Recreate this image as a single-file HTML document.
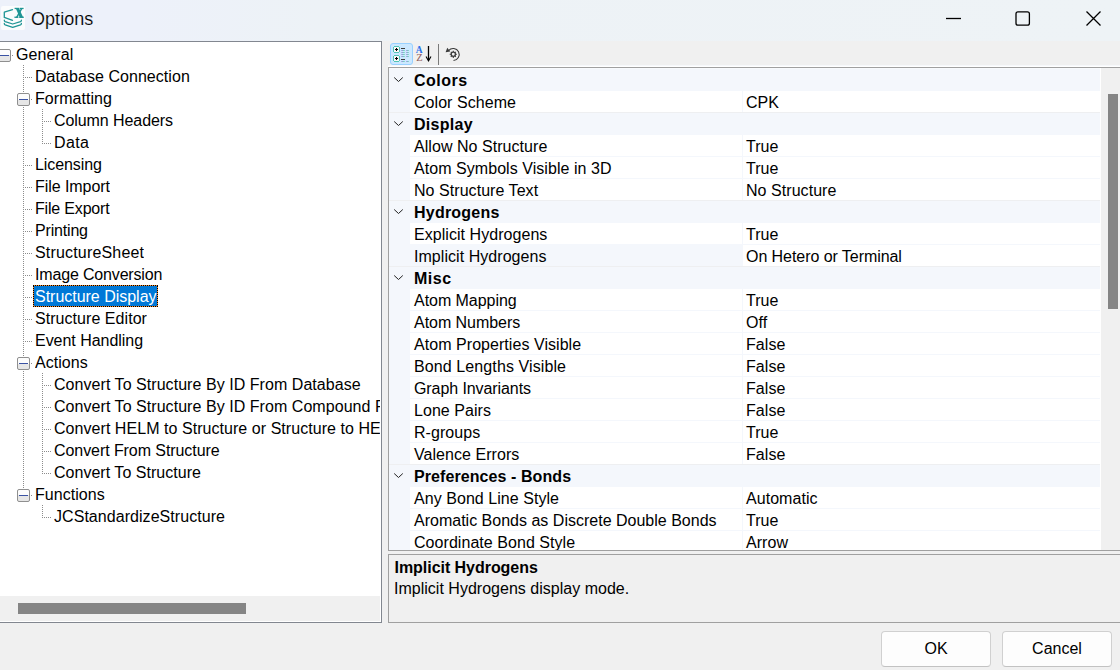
<!DOCTYPE html>
<html><head><meta charset="utf-8"><title>Options</title>
<style>
*{margin:0;padding:0;box-sizing:border-box}
html,body{width:1120px;height:670px;overflow:hidden;background:#f0f0f0}
body{position:relative;font-family:"Liberation Sans",sans-serif;font-size:16px;color:#000}
.a{position:absolute}
.t{position:absolute;white-space:nowrap;line-height:22px;height:22px;margin-top:1px;letter-spacing:0.05px}
.b{font-weight:bold}
.dv{position:absolute;width:1px;background-image:linear-gradient(#8c8c8c 50%,transparent 50%);background-size:1px 2px}
.dh{position:absolute;height:1px;background-image:linear-gradient(90deg,#8c8c8c 50%,transparent 50%);background-size:2px 1px}
.bx{position:absolute;width:13px;height:13px;border:1px solid #8f8f8f;border-radius:2px;background:linear-gradient(#fcfcfc 0,#fcfcfc 50%,#e6e6e6 50%,#e6e6e6 100%)}
.bx i{position:absolute;left:1px;top:5px;width:9px;height:1px;background:#3a52a3}
.gr{position:absolute;height:21px;background:#fff}
</style></head><body>

<div class="a" style="left:0;top:0;width:1120px;height:41px;background:linear-gradient(90deg,#edf1fa 0,#edf1fa 140px,#edf2f6 320px,#eef3f6 1120px)"></div>
<div class="a" style="left:1px;top:6px;width:24px;height:24px;background:#fbfcfd;border-radius:2px"></div>
<svg class="a" style="left:0;top:0" width="30" height="32" viewBox="0 0 30 32">
<g fill="none" stroke="#1f9595" stroke-width="1.3" stroke-linecap="round" stroke-linejoin="round">
<path d="M12.5 9.6 L4.3 12.2 L4.3 17.4 L12.5 20.4"/>
<path d="M4.3 20.2 Q4.3 21.3 5.2 21.7 L12.7 24 L20.5 21.7 Q21.4 21.3 21.4 20.2"/>
<path d="M4.3 23.4 Q4.3 24.5 5.2 24.9 L12.7 27.3 L20.5 24.9 Q21.4 24.5 21.4 23.4"/>
</g>
<g fill="#1f9595"><path d="M15.6 8 L18.9 8 L23.3 17.8 L19.9 17.8 z"/><path d="M21.2 8 L22.9 8 L17.4 17.8 L15.6 17.8 z"/>
<rect x="14.6" y="7.8" width="4.6" height="1.3"/><rect x="19.8" y="7.8" width="3.8" height="1.3"/><rect x="14.4" y="16.6" width="4" height="1.3"/><rect x="19.2" y="16.6" width="4.6" height="1.3"/></g>
</svg>
<div class="t" style="left:31px;top:7px;font-size:18px;line-height:22px;color:#000;-webkit-text-stroke:0.15px #edf1fa">Options</div>
<svg class="a" style="left:930px;top:0" width="190" height="40" viewBox="930 0 190 40">
<path d="M946 18.5 H961" stroke="#000" stroke-width="1.3"/>
<rect x="1016" y="11.8" width="13.4" height="13.4" rx="2" fill="none" stroke="#000" stroke-width="1.3"/>
<path d="M1086.5 11.5 L1100.5 25.5 M1100.5 11.5 L1086.5 25.5" stroke="#000" stroke-width="1.3"/>
</svg>
<div class="a" style="left:-1px;top:41px;width:383px;height:582px;border:1px solid #828790;background:#fff"></div>
<div class="a" style="left:0;top:596px;width:380px;height:25px;background:#f0f0f0"></div>
<div class="a" style="left:18px;top:603px;width:228px;height:11px;background:#858585"></div>
<div class="dv" style="left:23px;top:65px;height:424px"></div>
<div class="dv" style="left:42px;top:109px;height:35px"></div>
<div class="dv" style="left:42px;top:373px;height:101px"></div>
<div class="dv" style="left:42px;top:505px;height:13px"></div>
<div class="bx" style="left:-2px;top:49px"><i></i></div>
<div class="dh" style="left:12px;top:55px;width:1px"></div>
<div class="t" style="left:16px;top:43px;max-width:364px;overflow:hidden;letter-spacing:0.050px">General</div>
<div class="dh" style="left:23px;top:77px;width:9px"></div>
<div class="t" style="left:35px;top:65px;max-width:345px;overflow:hidden;letter-spacing:0.050px">Database Connection</div>
<div class="bx" style="left:17px;top:93px"><i></i></div>
<div class="dh" style="left:31px;top:99px;width:1px"></div>
<div class="t" style="left:35px;top:87px;max-width:345px;overflow:hidden;letter-spacing:0.050px">Formatting</div>
<div class="dh" style="left:42px;top:121px;width:9px"></div>
<div class="t" style="left:54px;top:109px;max-width:326px;overflow:hidden;letter-spacing:-0.073px">Column Headers</div>
<div class="dh" style="left:42px;top:143px;width:9px"></div>
<div class="t" style="left:54px;top:131px;max-width:326px;overflow:hidden;letter-spacing:0.383px">Data</div>
<div class="dh" style="left:23px;top:165px;width:9px"></div>
<div class="t" style="left:35px;top:153px;max-width:345px;overflow:hidden;letter-spacing:-0.088px">Licensing</div>
<div class="dh" style="left:23px;top:187px;width:9px"></div>
<div class="t" style="left:35px;top:175px;max-width:345px;overflow:hidden;letter-spacing:-0.060px">File Import</div>
<div class="dh" style="left:23px;top:209px;width:9px"></div>
<div class="t" style="left:35px;top:197px;max-width:345px;overflow:hidden;letter-spacing:-0.180px">File Export</div>
<div class="dh" style="left:23px;top:231px;width:9px"></div>
<div class="t" style="left:35px;top:219px;max-width:345px;overflow:hidden;letter-spacing:-0.179px">Printing</div>
<div class="dh" style="left:23px;top:253px;width:9px"></div>
<div class="t" style="left:35px;top:241px;max-width:345px;overflow:hidden;letter-spacing:0.173px">StructureSheet</div>
<div class="dh" style="left:23px;top:275px;width:9px"></div>
<div class="t" style="left:35px;top:263px;max-width:345px;overflow:hidden;letter-spacing:-0.163px">Image Conversion</div>
<div class="dh" style="left:23px;top:297px;width:9px"></div>
<div class="a" style="left:33px;top:285px;width:125px;height:22px;background:#0078d7;border:1px solid #ff8c2a;outline:1px dotted #000;outline-offset:-1px"></div>
<div class="t" style="left:35px;top:285px;color:#fff;letter-spacing:-0.019px">Structure Display</div>
<div class="dh" style="left:23px;top:319px;width:9px"></div>
<div class="t" style="left:35px;top:307px;max-width:345px;overflow:hidden;letter-spacing:0.050px">Structure Editor</div>
<div class="dh" style="left:23px;top:341px;width:9px"></div>
<div class="t" style="left:35px;top:329px;max-width:345px;overflow:hidden;letter-spacing:-0.035px">Event Handling</div>
<div class="bx" style="left:17px;top:357px"><i></i></div>
<div class="dh" style="left:31px;top:363px;width:1px"></div>
<div class="t" style="left:35px;top:351px;max-width:345px;overflow:hidden;letter-spacing:0.050px">Actions</div>
<div class="dh" style="left:42px;top:385px;width:9px"></div>
<div class="t" style="left:54px;top:373px;max-width:326px;overflow:hidden;letter-spacing:0.050px">Convert To Structure By ID From Database</div>
<div class="dh" style="left:42px;top:407px;width:9px"></div>
<div class="t" style="left:54px;top:395px;max-width:326px;overflow:hidden;letter-spacing:0.050px">Convert To Structure By ID From Compound Registration</div>
<div class="dh" style="left:42px;top:429px;width:9px"></div>
<div class="t" style="left:54px;top:417px;max-width:326px;overflow:hidden;letter-spacing:0.050px">Convert HELM to Structure or Structure to HELM</div>
<div class="dh" style="left:42px;top:451px;width:9px"></div>
<div class="t" style="left:54px;top:439px;max-width:326px;overflow:hidden;letter-spacing:-0.074px">Convert From Structure</div>
<div class="dh" style="left:42px;top:473px;width:9px"></div>
<div class="t" style="left:54px;top:461px;max-width:326px;overflow:hidden;letter-spacing:0.024px">Convert To Structure</div>
<div class="bx" style="left:17px;top:489px"><i></i></div>
<div class="dh" style="left:31px;top:495px;width:1px"></div>
<div class="t" style="left:35px;top:483px;max-width:345px;overflow:hidden;letter-spacing:0.050px">Functions</div>
<div class="dh" style="left:42px;top:517px;width:9px"></div>
<div class="t" style="left:54px;top:505px;max-width:326px;overflow:hidden;letter-spacing:0.050px">JCStandardizeStructure</div>
<div class="a" style="left:390px;top:43px;width:23px;height:22px;background:#cce8ff;border:1px solid #99d1ff;border-radius:3px"></div>
<svg class="a" style="left:388px;top:41px" width="80" height="26" viewBox="388 41 80 26">
<defs><linearGradient id="dg" x1="0" x2="1"><stop offset="0" stop-color="#a8c8f0"/><stop offset="0.3" stop-color="#a88ad8"/><stop offset="0.6" stop-color="#70cfc0"/><stop offset="1" stop-color="#9adcd0"/></linearGradient></defs>
<g shape-rendering="crispEdges">
<path d="M394 46h5v1h1v5h-1v1h-5v-1h-1v-5h1z" fill="#52c6b6"/>
<rect x="394" y="47" width="5" height="5" fill="#fbf7f7"/>
<path d="M394 55h5v1h1v5h-1v1h-5v-1h-1v-5h1z" fill="#52c6b6"/>
<rect x="394" y="56" width="5" height="5" fill="#fbf7f7"/>
<path d="M396 48h1v1h1v1h-1v1h-1v-1h-1v-1h1z" fill="#000"/>
<path d="M396 57h1v1h1v1h-1v1h-1v-1h-1v-1h1z" fill="#000"/>
<rect x="401" y="48" width="4" height="1" fill="#3a3a3a"/>
<rect x="401" y="59" width="4" height="1" fill="#3a3a3a"/>
<rect x="401" y="50" width="4" height="1" fill="url(#dg)"/><rect x="406" y="50" width="3" height="1" fill="url(#dg)"/>
<rect x="401" y="52" width="4" height="1" fill="url(#dg)"/><rect x="406" y="52" width="3" height="1" fill="url(#dg)"/>
<rect x="401" y="54" width="4" height="1" fill="url(#dg)"/><rect x="406" y="54" width="3" height="1" fill="url(#dg)"/>
<rect x="401" y="56" width="4" height="1" fill="url(#dg)"/><rect x="406" y="56" width="3" height="1" fill="url(#dg)"/>
<rect x="401" y="61" width="4" height="1" fill="url(#dg)"/><rect x="406" y="61" width="3" height="1" fill="url(#dg)"/>
</g>
<text x="415.8" y="53.3" font-family="Liberation Serif" font-weight="bold" font-size="9.5" fill="#2a6ee8">A</text>
<text x="416.3" y="61.3" font-family="Liberation Serif" font-size="10.5" fill="#8f5a5a">Z</text>
<path d="M428.5 46 V60" fill="none" stroke="#000" stroke-width="1.3"/>
<path d="M426 56.5 L428.5 60.8 L431 56.5" fill="none" stroke="#000" stroke-width="1.1"/>
<path d="M438.5 44 V65" stroke="#7a7a7a" stroke-width="1"/>
<path d="M448.6 50.6 A6 6 0 1 1 453.5 60.5" fill="none" stroke="#3a3a3a" stroke-width="1.1"/>
<path d="M447.3 47.8 L445.6 52.2 L450.2 51.6 z" fill="#3a3a3a"/>
<circle cx="453.3" cy="54.3" r="2.1" fill="none" stroke="#3a3a3a" stroke-width="1.3"/>
<g stroke="#3a3a3a" stroke-width="1.1">
<path d="M453.3 50.7 V52 M453.3 56.6 V57.9 M449.7 54.3 H451 M455.6 54.3 H456.9 M450.8 51.8 L451.7 52.7 M454.9 55.9 L455.8 56.8 M455.8 51.8 L454.9 52.7 M451.7 55.9 L450.8 56.8"/>
</g>
</svg>
<div class="a" style="left:388px;top:65px;width:732px;height:1px;background:#f6f8fb"></div>
<div class="a" style="left:388px;top:66px;width:732px;height:1px;background:#fff"></div>
<div class="a" style="left:388px;top:67px;width:740px;height:484px;border:1px solid #a0a0a0;background:#f4f7fc"></div>
<div class="a" style="left:389px;top:68px;width:712px;height:1px;background:#f8fafd"></div>
<div class="a" style="left:1100px;top:68px;width:1px;height:482px;background:#fff"></div>
<div class="a" style="left:1101px;top:68px;width:19px;height:482px;background:#f0f0f0"></div>
<div class="a" style="left:1108px;top:94px;width:10px;height:215px;background:#858585"></div>
<div class="a" style="left:389px;top:68px;width:711px;height:482px;overflow:hidden">
<svg class="a" style="left:4px;top:8px" width="12" height="8" viewBox="0 0 12 8"><path d="M1.2 1.5 L5.5 5.5 L9.8 1.5" fill="none" stroke="#222" stroke-width="1"/></svg>
<div class="t b" style="left:25px;top:1px;letter-spacing:0.5px">Colors</div>
<div class="gr" style="left:21px;top:23px;width:332px"></div>
<div class="gr" style="left:354px;top:23px;width:357px"></div>
<div class="t" style="left:25px;top:23px;letter-spacing:0.050px">Color Scheme</div>
<div class="t" style="left:357px;top:23px;letter-spacing:0.050px">CPK</div>
<svg class="a" style="left:4px;top:52px" width="12" height="8" viewBox="0 0 12 8"><path d="M1.2 1.5 L5.5 5.5 L9.8 1.5" fill="none" stroke="#222" stroke-width="1"/></svg>
<div class="t b" style="left:25px;top:45px;letter-spacing:0.3px">Display</div>
<div class="a" style="left:0;top:44px;width:711px;height:1px;background:#eeeff1"></div>
<div class="gr" style="left:21px;top:67px;width:332px"></div>
<div class="gr" style="left:354px;top:67px;width:357px"></div>
<div class="t" style="left:25px;top:67px;letter-spacing:0.050px">Allow No Structure</div>
<div class="t" style="left:357px;top:67px;letter-spacing:0.050px">True</div>
<div class="gr" style="left:21px;top:89px;width:332px"></div>
<div class="gr" style="left:354px;top:89px;width:357px"></div>
<div class="t" style="left:25px;top:89px;letter-spacing:0.050px">Atom Symbols Visible in 3D</div>
<div class="t" style="left:357px;top:89px;letter-spacing:0.050px">True</div>
<div class="gr" style="left:21px;top:111px;width:332px"></div>
<div class="gr" style="left:354px;top:111px;width:357px"></div>
<div class="t" style="left:25px;top:111px;letter-spacing:0.050px">No Structure Text</div>
<div class="t" style="left:357px;top:111px;letter-spacing:0.050px">No Structure</div>
<svg class="a" style="left:4px;top:140px" width="12" height="8" viewBox="0 0 12 8"><path d="M1.2 1.5 L5.5 5.5 L9.8 1.5" fill="none" stroke="#222" stroke-width="1"/></svg>
<div class="t b" style="left:25px;top:133px;letter-spacing:0.22px">Hydrogens</div>
<div class="a" style="left:0;top:132px;width:711px;height:1px;background:#eeeff1"></div>
<div class="gr" style="left:21px;top:155px;width:332px"></div>
<div class="gr" style="left:354px;top:155px;width:357px"></div>
<div class="t" style="left:25px;top:155px;letter-spacing:0.050px">Explicit Hydrogens</div>
<div class="t" style="left:357px;top:155px;letter-spacing:0.050px">True</div>
<div class="gr" style="left:354px;top:177px;width:357px"></div>
<div class="t" style="left:25px;top:177px;letter-spacing:0.050px">Implicit Hydrogens</div>
<div class="t" style="left:357px;top:177px;letter-spacing:-0.060px">On Hetero or Terminal</div>
<svg class="a" style="left:4px;top:206px" width="12" height="8" viewBox="0 0 12 8"><path d="M1.2 1.5 L5.5 5.5 L9.8 1.5" fill="none" stroke="#222" stroke-width="1"/></svg>
<div class="t b" style="left:25px;top:199px;letter-spacing:0.5px">Misc</div>
<div class="a" style="left:0;top:198px;width:711px;height:1px;background:#eeeff1"></div>
<div class="gr" style="left:21px;top:221px;width:332px"></div>
<div class="gr" style="left:354px;top:221px;width:357px"></div>
<div class="t" style="left:25px;top:221px;letter-spacing:-0.041px">Atom Mapping</div>
<div class="t" style="left:357px;top:221px;letter-spacing:0.050px">True</div>
<div class="gr" style="left:21px;top:243px;width:332px"></div>
<div class="gr" style="left:354px;top:243px;width:357px"></div>
<div class="t" style="left:25px;top:243px;letter-spacing:-0.041px">Atom Numbers</div>
<div class="t" style="left:357px;top:243px;letter-spacing:0.050px">Off</div>
<div class="gr" style="left:21px;top:265px;width:332px"></div>
<div class="gr" style="left:354px;top:265px;width:357px"></div>
<div class="t" style="left:25px;top:265px;letter-spacing:0.050px">Atom Properties Visible</div>
<div class="t" style="left:357px;top:265px;letter-spacing:0.050px">False</div>
<div class="gr" style="left:21px;top:287px;width:332px"></div>
<div class="gr" style="left:354px;top:287px;width:357px"></div>
<div class="t" style="left:25px;top:287px;letter-spacing:0.103px">Bond Lengths Visible</div>
<div class="t" style="left:357px;top:287px;letter-spacing:0.050px">False</div>
<div class="gr" style="left:21px;top:309px;width:332px"></div>
<div class="gr" style="left:354px;top:309px;width:357px"></div>
<div class="t" style="left:25px;top:309px;letter-spacing:-0.083px">Graph Invariants</div>
<div class="t" style="left:357px;top:309px;letter-spacing:0.050px">False</div>
<div class="gr" style="left:21px;top:331px;width:332px"></div>
<div class="gr" style="left:354px;top:331px;width:357px"></div>
<div class="t" style="left:25px;top:331px;letter-spacing:0.050px">Lone Pairs</div>
<div class="t" style="left:357px;top:331px;letter-spacing:0.050px">False</div>
<div class="gr" style="left:21px;top:353px;width:332px"></div>
<div class="gr" style="left:354px;top:353px;width:357px"></div>
<div class="t" style="left:25px;top:353px;letter-spacing:0.050px">R-groups</div>
<div class="t" style="left:357px;top:353px;letter-spacing:0.050px">True</div>
<div class="gr" style="left:21px;top:375px;width:332px"></div>
<div class="gr" style="left:354px;top:375px;width:357px"></div>
<div class="t" style="left:25px;top:375px;letter-spacing:0.050px">Valence Errors</div>
<div class="t" style="left:357px;top:375px;letter-spacing:0.050px">False</div>
<svg class="a" style="left:4px;top:404px" width="12" height="8" viewBox="0 0 12 8"><path d="M1.2 1.5 L5.5 5.5 L9.8 1.5" fill="none" stroke="#222" stroke-width="1"/></svg>
<div class="t b" style="left:25px;top:397px;letter-spacing:0.08px">Preferences - Bonds</div>
<div class="a" style="left:0;top:396px;width:711px;height:1px;background:#eeeff1"></div>
<div class="gr" style="left:21px;top:419px;width:332px"></div>
<div class="gr" style="left:354px;top:419px;width:357px"></div>
<div class="t" style="left:25px;top:419px;letter-spacing:0.050px">Any Bond Line Style</div>
<div class="t" style="left:357px;top:419px;letter-spacing:0.050px">Automatic</div>
<div class="gr" style="left:21px;top:441px;width:332px"></div>
<div class="gr" style="left:354px;top:441px;width:357px"></div>
<div class="t" style="left:25px;top:441px;letter-spacing:0.005px">Aromatic Bonds as Discrete Double Bonds</div>
<div class="t" style="left:357px;top:441px;letter-spacing:0.050px">True</div>
<div class="gr" style="left:21px;top:463px;width:332px"></div>
<div class="gr" style="left:354px;top:463px;width:357px"></div>
<div class="t" style="left:25px;top:463px;letter-spacing:0.050px">Coordinate Bond Style</div>
<div class="t" style="left:357px;top:463px;letter-spacing:0.050px">Arrow</div>
</div>
<div class="a" style="left:388px;top:554px;width:740px;height:69px;border:1px solid #a0a0a0;background:#f0f0f0"></div>
<div class="t b" style="left:394.5px;top:556px;letter-spacing:-0.04px">Implicit Hydrogens</div>
<div class="t" style="left:394px;top:577px;letter-spacing:0.015px">Implicit Hydrogens display mode.</div>
<div class="a" style="left:881px;top:631px;width:110px;height:36px;border:1px solid #d0d0d0;border-bottom-color:#c2c2c2;border-radius:4px;background:#fdfdfd;text-align:center;line-height:34px">OK</div>
<div class="a" style="left:1002px;top:631px;width:110px;height:36px;border:1px solid #d0d0d0;border-bottom-color:#c2c2c2;border-radius:4px;background:#fdfdfd;text-align:center;line-height:34px">Cancel</div>
</body></html>
